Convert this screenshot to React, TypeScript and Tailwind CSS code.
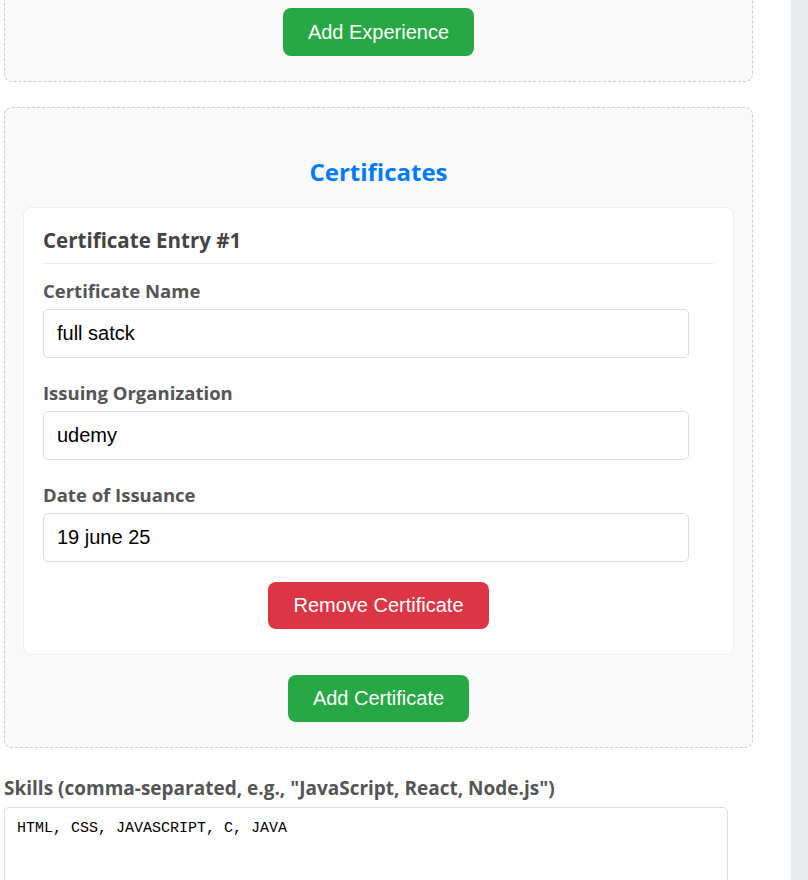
import * as React from 'react'

const heading = { fontFamily: '"Open Sans", "Noto Sans", sans-serif' }
const arial = { fontFamily: '"Liberation Sans", Arial, sans-serif' }
const mono = { fontFamily: '"Liberation Mono", "DejaVu Sans Mono", monospace' }

type Field = { label: string; value: string }

const champs: Field[] = [
  { label: 'Certificate Name', value: 'full satck' },
  { label: 'Issuing Organization', value: 'udemy' },
  { label: 'Date of Issuance', value: '19 june 25' },
]

function Bouton({
  couleur,
  haut = false,
  children,
}: {
  couleur: 'vert' | 'rouge'
  haut?: boolean
  children: React.ReactNode
}) {
  return (
    <button
      type="button"
      style={arial}
      className={
        'rounded-[8px] px-[25px] py-[12px] text-[20px] text-white ' +
        (haut ? 'leading-[24px] ' : 'leading-[23px] ') +
        (couleur === 'vert' ? 'bg-[#28a745]' : 'bg-[#dc3545]')
      }
    >
      {children}
    </button>
  )
}

function Champ({ label, value }: Field) {
  return (
    <div className="flex flex-col">
      <label style={heading} className="text-[18.5px] font-bold leading-[21px] text-[#555]">
        {label}
      </label>
      <input
        readOnly
        value={value}
        style={arial}
        className="mt-[8px] h-[49px] w-[646px] rounded-[5px] border border-[#ddd] bg-white px-[13px] text-[20px] text-black outline-none"
      />
    </div>
  )
}

export default function App() {
  return (
    <div className="flex min-h-[880px] bg-white">
      <div className="w-[791px] shrink-0 pl-[4px]">
        {/* bloc expérience, coupé en haut */}
        <div className="flex w-[749px] justify-center rounded-b-[8px] border border-t-0 border-dashed border-[#ccc] bg-[#f9f9f9] pb-[25px] pt-[8px]">
          <Bouton couleur="vert" haut>
            Add Experience
          </Bouton>
        </div>

        {/* certificats */}
        <div className="mt-[25px] flex w-[749px] flex-col items-center rounded-[8px] border border-dashed border-[#ccc] bg-[#f9f9f9] px-[18px] pb-[25px] pt-[49px]">
          <h2 style={heading} className="text-[24px] font-bold leading-[30px] text-[#007bff]">
            Certificates
          </h2>
          <div className="mt-[20px] w-[711px] rounded-[8px] border border-[#eee] bg-white px-[19px] pb-[25px] pt-[20px]">
            <h3
              style={heading}
              className="border-b border-[#eee] pb-[10px] text-[20.5px] font-bold leading-[25px] text-[#444]"
            >
              Certificate Entry #1
            </h3>
            <div className="mt-[16px] flex flex-col gap-[24px]">
              {champs.map((c) => (
                <Champ key={c.label} {...c} />
              ))}
            </div>
            <div className="mt-[20px] flex justify-center">
              <Bouton couleur="rouge">Remove Certificate</Bouton>
            </div>
          </div>
          <div className="mt-[20px]">
            <Bouton couleur="vert">Add Certificate</Bouton>
          </div>
        </div>

        {/* compétences */}
        <label style={heading} className="mt-[30px] block text-[19px] font-bold leading-[21px] text-[#555]">
          Skills (comma-separated, e.g., "JavaScript, React, Node.js")
        </label>
        <textarea
          readOnly
          value="HTML, CSS, JAVASCRIPT, C, JAVA"
          style={mono}
          className="mt-[8px] block h-[120px] w-[724px] resize-none rounded-[5px] border border-[#ddd] bg-white px-[12px] py-[12px] text-[15px] leading-[18px] text-black outline-none"
        />
      </div>
      <div className="flex-1 bg-[#e9ecef]" />
    </div>
  )
}
